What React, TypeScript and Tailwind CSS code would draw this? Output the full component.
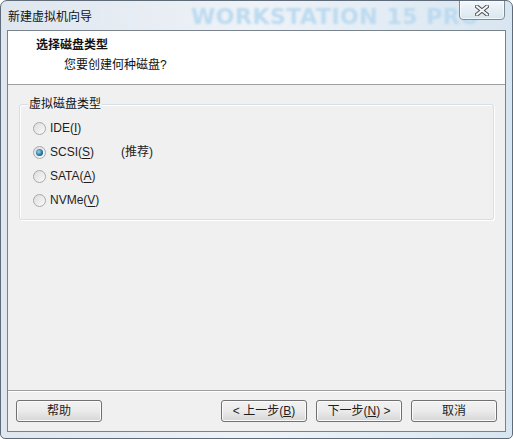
import type { ReactNode } from "react"

const FONT = { fontFamily: '"Liberation Sans", "Noto Sans CJK SC", sans-serif' }

/** 单选圆点 */
function Radio({ checked }: { checked?: boolean }) {
  return (
    <span className="relative inline-flex w-[13px] h-[13px] shrink-0 rounded-full border border-[#a9a9a9] bg-gradient-to-br from-[#dcdcdc] to-[#fbfbfb] items-center justify-center">
      {checked && (
        <span className="w-[7px] h-[7px] rounded-full bg-[radial-gradient(circle_at_40%_40%,#9fd4ef,#1f6f9c_60%,#0f4a6e)]" />
      )}
    </span>
  )
}

function Option({ label, keyChar, checked, extra }: { label: string; keyChar: string; checked?: boolean; extra?: ReactNode }) {
  return (
    <div className="flex items-center h-[24px]">
      <Radio checked={checked} />
      <span className="ml-[4px] text-[#1e1e1e]">
        {label}(<span className="underline underline-offset-2">{keyChar}</span>)
      </span>
      {extra}
    </div>
  )
}

function Btn({ children, className = "" }: { children: ReactNode; className?: string }) {
  return (
    <button className={`w-[86px] h-[22px] rounded-[3px] border border-[#707070] bg-gradient-to-b from-[#f2f2f2] via-[#ebebeb] to-[#d6d6d6] text-[12px] text-[#1e1e1e] shadow-[inset_0_0_0_1px_#fbfbfb] ${className}`}>
      {children}
    </button>
  )
}

export default function App() {
  return (
    <div style={FONT} className="w-[513px] h-[439px] flex flex-col text-[12px] bg-gradient-to-r from-[#dfe6ee] via-[#eef3f8] to-[#d8e6f1] border border-[#5f6b78] rounded-t-[7px] rounded-b-[5px] overflow-hidden">
      {/* 标题栏 */}
      <div className="relative h-[29px] shrink-0 overflow-hidden">
        <span className="absolute left-[7px] top-[7px] text-[#111]">新建虚拟机向导</span>
        <span
          className="absolute left-[190px] top-[4px] text-[22px] leading-[24px] font-bold tracking-[0.5px] text-[#bcdaf0] whitespace-nowrap blur-[1px]"
          style={{ fontFamily: '"DejaVu Sans", sans-serif' }}
        >
          WORKSTATION 15 PRO
        </span>
        <div className="absolute z-10 left-[458px] top-[-1px] w-[46px] h-[20px] rounded-b-[4px] border border-[#7d8a97] bg-gradient-to-b from-[#f3f7fa] to-[#d9e6f0] flex items-center justify-center shadow-[inset_0_0_0_1px_#ffffffaa]">
          <svg width="14" height="11" viewBox="0 0 14 11">
            <path d="M2 1.5 L12 9.5 M12 1.5 L2 9.5" stroke="#4a4f55" strokeWidth="4" strokeLinecap="square" />
            <path d="M2 1.5 L12 9.5 M12 1.5 L2 9.5" stroke="#f4f6f8" strokeWidth="2" strokeLinecap="square" />
          </svg>
        </div>
      </div>

      {/* 客户区 */}
      <div className="flex-1 mx-[6px] mb-[6px] flex flex-col border border-[#7a828b] bg-[#f0f0f0]">
        <div className="h-[54px] shrink-0 bg-white border-b border-[#a0a0a0] pt-[5px]">
          <div className="ml-[28px] font-bold text-[#111] leading-[19px]">选择磁盘类型</div>
          <div className="ml-[56px] mt-[1px] text-[#111] leading-[19px]">您要创建何种磁盘?</div>
        </div>

        <div className="flex-1 px-[11px] pt-[19px]">
          <div className="relative h-[116px] border border-[#d5dfe5] rounded-[3px] shadow-[inset_1px_1px_0_#fff,1px_1px_0_#fff] pl-[13px] pt-[11px]">
            <span className="absolute left-[8px] top-[-9px] px-[1px] bg-[#f0f0f0] text-[#111] leading-[16px]">虚拟磁盘类型</span>
            <Option label="IDE" keyChar="I" />
            <Option
              label="SCSI"
              keyChar="S"
              checked
              extra={<span className="ml-[27px] text-[#1e1e1e]">(推荐)</span>}
            />
            <Option label="SATA" keyChar="A" />
            <Option label="NVMe" keyChar="V" />
          </div>
        </div>

        <div className="h-[41px] shrink-0 border-t border-[#a0a0a0] shadow-[inset_0_1px_0_#fff] flex items-center px-[8px]">
          <Btn>帮助</Btn>
          <div className="flex-1" />
          <Btn>&lt; 上一步(<span className="underline">B</span>)</Btn>
          <Btn className="ml-[9px]">下一步(<span className="underline">N</span>) &gt;</Btn>
          <Btn className="ml-[9px]">取消</Btn>
        </div>
      </div>
    </div>
  )
}
